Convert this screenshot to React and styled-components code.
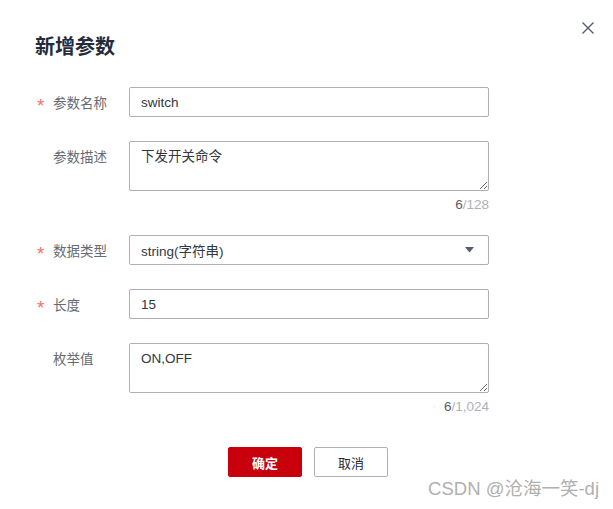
import React from 'react';
import styled, { createGlobalStyle } from 'styled-components';

const GlobalStyle = createGlobalStyle`
  html, body {
    margin: 0;
    padding: 0;
    background: #ffffff;
  }
  body {
    font-family: "Liberation Sans", Arial, "Noto Sans CJK SC", sans-serif;
  }
`;

const fields = [
  { label: '参数名称', required: true, type: 'input', value: 'switch' },
  { label: '参数描述', type: 'textarea', value: '下发开关命令', count: '6', max: '/128' },
  { label: '数据类型', required: true, type: 'select', value: 'string(字符串)' },
  { label: '长度', required: true, type: 'input', value: '15' },
  { label: '枚举值', type: 'textarea', value: 'ON,OFF', count: '6', max: '/1,024' },
];

const App = () => {
  return (
    <Dialog>
      <GlobalStyle />
      <CloseButton aria-label="close">
        <svg width="14" height="14" viewBox="0 0 14 14">
          <path d="M1.5 1.5 L12.5 12.5 M12.5 1.5 L1.5 12.5" stroke="#575d6c" strokeWidth="1.4" fill="none" />
        </svg>
      </CloseButton>
      <Title>新增参数</Title>

      <Form>
        {fields.map((f) => (
          <Row key={f.label} $tight={!!f.count}>
            <Label>
              <Star>{f.required ? '*' : ''}</Star>
              {f.label}
            </Label>
            <Control>
              {f.type === 'input' && <TextInput readOnly value={f.value} />}
              {f.type === 'textarea' && <TextArea readOnly value={f.value} />}
              {f.type === 'select' && (
                <SelectBox>
                  <span>{f.value}</span>
                  <svg width="9" height="6" viewBox="0 0 9 6">
                    <path d="M0 0 L9 0 L4.5 5.5 Z" fill="#575d6c" />
                  </svg>
                </SelectBox>
              )}
              {f.count && (
                <Counter>
                  <b>{f.count}</b>
                  {f.max}
                </Counter>
              )}
            </Control>
          </Row>
        ))}
      </Form>

      <Footer>
        <Button $primary>确定</Button>
        <Button>取消</Button>
      </Footer>

      <Watermark>CSDN @沧海一笑-dj</Watermark>
    </Dialog>
  );
};

const Dialog = styled.div`
  position: relative;
  width: 613px;
  height: 509px;
  box-sizing: border-box;
  padding: 33px 0 0 0;
  background: #fff;
  overflow: hidden;
`;

const CloseButton = styled.div`
  position: absolute;
  top: 21px;
  right: 18px;
  width: 14px;
  height: 14px;
  display: flex;
`;

const Title = styled.h2`
  margin: 0 0 0 35px;
  font-size: 20px;
  line-height: 26px;
  font-weight: bold;
  color: #252b3a;
  font-family: "Noto Sans CJK SC", sans-serif;
`;

const Form = styled.div`
  display: flex;
  flex-direction: column;
  margin-top: 28px;
  padding-left: 37px;
`;

const Row = styled.div`
  display: grid;
  grid-template-columns: 92px 360px;
  align-items: start;
  margin-bottom: ${(p) => (p.$tight ? '20px' : '24px')};
`;

const Label = styled.div`
  display: flex;
  align-items: center;
  height: 30px;
  font-size: 13.5px;
  color: #666a73;
  font-family: "Noto Sans CJK SC", sans-serif;
`;

const Star = styled.span`
  display: inline-block;
  width: 16px;
  height: 30px;
  line-height: 38px;
  font-size: 19px;
  color: #f66f6a;
  font-family: "Liberation Sans", sans-serif;
`;

const Control = styled.div`
  display: flex;
  flex-direction: column;
`;

const baseField = `
  box-sizing: border-box;
  width: 360px;
  border: 1px solid #adb0b8;
  border-radius: 2px;
  background: #fff;
  color: #33373f;
  font-size: 13.5px;
  font-family: "Liberation Sans", Arial, "Noto Sans CJK SC", sans-serif;
  outline: none;
`;

const TextInput = styled.input`
  ${baseField}
  height: 30px;
  padding: 0 11px;
`;

const TextArea = styled.textarea`
  ${baseField}
  display: block;
  height: 50px;
  padding: 6px 11px;
  line-height: 18px;
  resize: vertical;
  margin: 0;
`;

const SelectBox = styled.div`
  ${baseField}
  height: 30px;
  padding: 0 14px 0 11px;
  display: flex;
  align-items: center;
  justify-content: space-between;
`;

const Counter = styled.div`
  margin-top: 4px;
  text-align: right;
  font-size: 13.5px;
  line-height: 20px;
  color: #adb0b8;

  b {
    font-weight: normal;
    color: #575d6c;
  }
`;

const Footer = styled.div`
  display: flex;
  justify-content: center;
  gap: 12px;
  margin-top: 10px;
  padding-left: 3px;
`;

const Button = styled.div`
  box-sizing: border-box;
  width: 74px;
  height: 30px;
  display: flex;
  align-items: center;
  justify-content: center;
  border-radius: 2px;
  font-size: 13px;
  font-weight: ${(p) => (p.$primary ? 'bold' : 'normal')};
  font-family: "Noto Sans CJK SC", sans-serif;
  background: ${(p) => (p.$primary ? '#c7000b' : '#fff')};
  color: ${(p) => (p.$primary ? '#fff' : '#252b3a')};
  border: 1px solid ${(p) => (p.$primary ? '#c7000b' : '#adb0b8')};
`;

const Watermark = styled.div`
  position: absolute;
  right: 14px;
  bottom: 9px;
  font-size: 18.5px;
  color: #b0b0b0;
  font-family: "Liberation Sans", "Noto Sans CJK SC", sans-serif;
  white-space: nowrap;
`;

export default App;
